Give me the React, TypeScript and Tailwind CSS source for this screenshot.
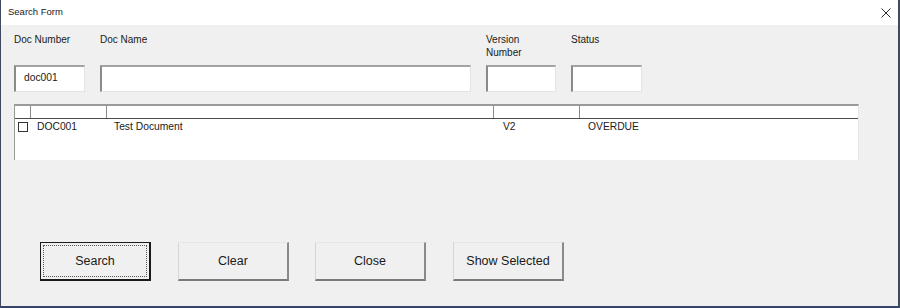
import React from "react";

function Field({ label, width, value }: { label: React.ReactNode; width: string; value?: string }) {
  return (
    <div className="flex flex-col">
      <div className="h-[32px] text-[10px] leading-[13px] text-[#1a1a1a]">{label}</div>
      <div
        className={`${width} h-[27px] bg-white border-t-2 border-l-2 border-t-[#a3a3a3] border-l-[#8a8a8a] border-r border-b border-r-[#e3e3e3] border-b-[#e3e3e3] text-[10.3px] leading-[20px] pl-[8px] pt-[1px] text-[#1a1a1a]`}
      >
        {value}
      </div>
    </div>
  );
}

function Btn({ label, focus, cls }: { label: string; focus?: boolean; cls: string }) {
  if (focus) {
    return (
      <div className={`${cls} w-[111px] h-[39px] border border-[#1a1a1a] border-b-2 border-r-2 bg-[#f0f0f0] p-[2px]`}>
        <div className="w-full h-full border border-dotted border-[#555] flex items-center justify-center text-[12.5px] text-[#1a1a1a]">
          {label}
        </div>
      </div>
    );
  }
  return (
    <div
      className={`${cls} w-[111px] h-[39px] bg-[#f0f0f0] border-t border-l border-t-[#e6e6e6] border-l-[#d6d6d6] border-b-2 border-r-2 border-b-[#7a7a7a] border-r-[#8a8a8a] flex items-center justify-center text-[12.5px] text-[#1a1a1a]`}
    >
      {label}
    </div>
  );
}

export default function App() {
  return (
    <div className="w-[900px] h-[308px] bg-[#f0f0f0] border-l border-r-2 border-b-2 border-l-[#3f4a5e] border-r-[#3f4a5e] border-b-[#35456a] flex flex-col font-['Liberation_Sans',Arial,sans-serif] overflow-hidden">
      <div className="h-[25px] bg-white flex items-center justify-between pl-[7px] pr-[7px] shrink-0">
        <span className="text-[9.5px] text-[#1a1a1a]">Search Form</span>
        <svg width="10" height="10" viewBox="0 0 10 10">
          <path d="M0.5 0.5 L9.5 9.5 M9.5 0.5 L0.5 9.5" stroke="#2a2a2a" strokeWidth="1" fill="none" />
        </svg>
      </div>
      <div className="flex flex-col pl-[13px] pt-[8px]">
        <div className="flex gap-[15px]">
          <Field label="Doc Number" width="w-[71px]" value="doc001" />
          <Field label="Doc Name" width="w-[371px]" />
          <Field
            label={
              <>
                Version
                <br />
                Number
              </>
            }
            width="w-[70px]"
          />
          <Field label="Status" width="w-[71px]" />
        </div>
        <div className="mt-[12px] w-[845px] h-[56px] bg-white border-t-2 border-l border-r border-t-[#9a9a9a] border-l-[#9a9a9a] border-r-[#e6e6e6] flex flex-col">
          <div className="grid grid-cols-[15px_76px_387px_86px_1fr] h-[13px] border-b border-b-[#4a4a4a]">
            <div />
            <div className="border-l border-[#8a8a8a]" />
            <div className="border-l border-[#8a8a8a]" />
            <div className="border-l border-[#8a8a8a]" />
            <div className="border-l border-[#8a8a8a]" />
          </div>
          <div className="grid grid-cols-[15px_76px_387px_86px_1fr] h-[14px] items-center text-[10.3px] text-[#1a1a1a]">
            <div className="pl-[3px] flex items-center">
              <div className="w-[10px] h-[10px] border border-[#333] bg-white" />
            </div>
            <div className="pl-[7px]">DOC001</div>
            <div className="pl-[8px]">Test Document</div>
            <div className="pl-[10px]">V2</div>
            <div className="pl-[9px]">OVERDUE</div>
          </div>
        </div>
        <div className="flex mt-[82px] pl-[26px]">
          <Btn label="Search" focus cls="" />
          <Btn label="Clear" cls="ml-[27px]" />
          <Btn label="Close" cls="ml-[26px]" />
          <Btn label="Show Selected" cls="ml-[27px]" />
        </div>
      </div>
    </div>
  );
}
